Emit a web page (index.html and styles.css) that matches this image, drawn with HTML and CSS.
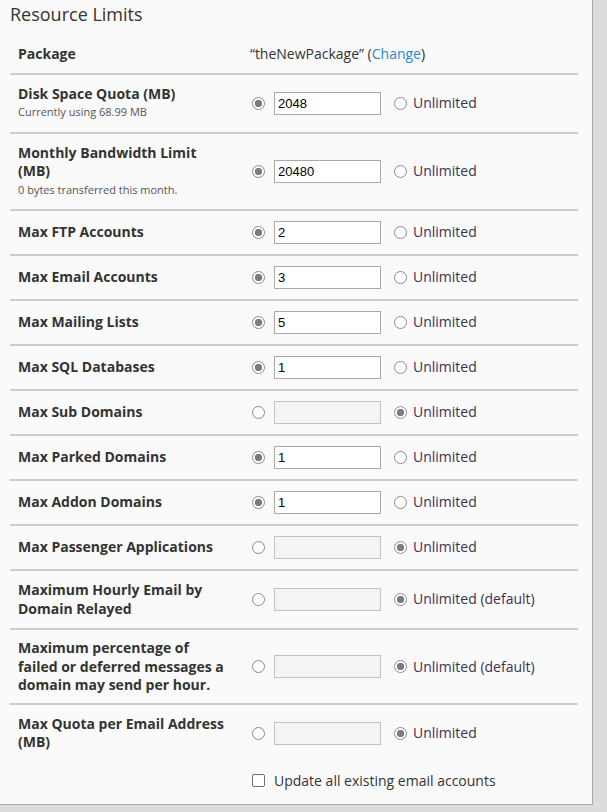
FILE: index.html
```html
<!DOCTYPE html>
<html>
<head>
<meta charset="utf-8">
<link rel="stylesheet" href="styles.css">
</head>
<body>
<div class="panel">
  <h2 class="title">Resource Limits</h2>
  <table class="limits">
    <tr class="pkg">
      <th>Package</th>
      <td>“theNewPackage” (<a href="#" class="link">Change</a>)</td>
    </tr>
    <tr>
      <th>Disk Space Quota (MB)<div class="sub">Currently using 68.99 MB</div></th>
      <td><div class="ctrl"><input type="radio" name="r1" class="radio" checked><input type="text" class="num" value="2048"><label class="unl"><input type="radio" name="r1" class="radio">Unlimited</label></div></td>
    </tr>
    <tr>
      <th>Monthly Bandwidth Limit (MB)<div class="sub">0 bytes transferred this month.</div></th>
      <td><div class="ctrl"><input type="radio" name="r2" class="radio" checked><input type="text" class="num" value="20480"><label class="unl"><input type="radio" name="r2" class="radio">Unlimited</label></div></td>
    </tr>
    <tr>
      <th>Max FTP Accounts</th>
      <td><div class="ctrl"><input type="radio" name="r3" class="radio" checked><input type="text" class="num" value="2"><label class="unl"><input type="radio" name="r3" class="radio">Unlimited</label></div></td>
    </tr>
    <tr>
      <th>Max Email Accounts</th>
      <td><div class="ctrl"><input type="radio" name="r4" class="radio" checked><input type="text" class="num" value="3"><label class="unl"><input type="radio" name="r4" class="radio">Unlimited</label></div></td>
    </tr>
    <tr>
      <th>Max Mailing Lists</th>
      <td><div class="ctrl"><input type="radio" name="r5" class="radio" checked><input type="text" class="num" value="5"><label class="unl"><input type="radio" name="r5" class="radio">Unlimited</label></div></td>
    </tr>
    <tr>
      <th>Max SQL Databases</th>
      <td><div class="ctrl"><input type="radio" name="r6" class="radio" checked><input type="text" class="num" value="1"><label class="unl"><input type="radio" name="r6" class="radio">Unlimited</label></div></td>
    </tr>
    <tr>
      <th>Max Sub Domains</th>
      <td><div class="ctrl"><input type="radio" name="r7" class="radio"><input type="text" class="num" value="" disabled><label class="unl"><input type="radio" name="r7" class="radio" checked>Unlimited</label></div></td>
    </tr>
    <tr>
      <th>Max Parked Domains</th>
      <td><div class="ctrl"><input type="radio" name="r8" class="radio" checked><input type="text" class="num" value="1"><label class="unl"><input type="radio" name="r8" class="radio">Unlimited</label></div></td>
    </tr>
    <tr>
      <th>Max Addon Domains</th>
      <td><div class="ctrl"><input type="radio" name="r9" class="radio" checked><input type="text" class="num" value="1"><label class="unl"><input type="radio" name="r9" class="radio">Unlimited</label></div></td>
    </tr>
    <tr>
      <th>Max Passenger Applications</th>
      <td><div class="ctrl"><input type="radio" name="r10" class="radio"><input type="text" class="num" value="" disabled><label class="unl"><input type="radio" name="r10" class="radio" checked>Unlimited</label></div></td>
    </tr>
    <tr>
      <th>Maximum Hourly Email by Domain Relayed</th>
      <td><div class="ctrl"><input type="radio" name="r11" class="radio"><input type="text" class="num" value="" disabled><label class="unl"><input type="radio" name="r11" class="radio" checked>Unlimited (default)</label></div></td>
    </tr>
    <tr class="tight">
      <th>Maximum percentage of failed or deferred messages a domain may send per hour.</th>
      <td><div class="ctrl"><input type="radio" name="r12" class="radio"><input type="text" class="num" value="" disabled><label class="unl"><input type="radio" name="r12" class="radio" checked>Unlimited (default)</label></div></td>
    </tr>
    <tr>
      <th>Max Quota per Email Address (MB)</th>
      <td><div class="ctrl"><input type="radio" name="r13" class="radio"><input type="text" class="num" value="" disabled><label class="unl"><input type="radio" name="r13" class="radio" checked>Unlimited</label></div></td>
    </tr>
    <tr class="extra">
      <th></th>
      <td><label class="chk"><input type="checkbox" class="box">Update all existing email accounts</label></td>
    </tr>
  </table>
</div>
</body>
</html>
```

FILE: styles.css
```css
html, body {
  margin: 0;
  padding: 0;
  background: #dcdcdc;
}
body {
  font-family: "Open Sans", "Liberation Sans", sans-serif;
  color: #333;
}
.panel {
  width: 593px;
  height: 805px;
  background: #fafafa;
  border-right: 1px solid #a9a9a9;
  border-bottom: 1px solid #a9a9a9;
  box-sizing: border-box;
  overflow: hidden;
}
.title {
  margin: 0;
  padding: 2px 10px 0;
  font-size: 18px;
  font-weight: normal;
  line-height: 24px;
  color: #333;
}
.limits {
  margin: 6px 0 0 10px;
  width: 568px;
  border-collapse: collapse;
}
.limits tr {
  border-top: 2px solid #cdcdcd;
}
.limits tr.pkg,
.limits tr.extra {
  border-top: none;
}
.limits th {
  width: 210px;
  padding: 10px 14px 10px 8px;
  text-align: left;
  vertical-align: middle;
  font-size: 14px;
  font-weight: bold;
  line-height: 18.5px;
  color: #333;
}
.limits td {
  padding: 10px 8px;
  vertical-align: middle;
  font-size: 14px;
  line-height: 18.5px;
}
.limits tr.pkg th,
.limits tr.pkg td {
  padding-top: 13px;
  padding-bottom: 9px;
}
.limits tr.tight th,
.limits tr.tight td {
  padding-top: 9px;
  padding-bottom: 8px;
}
.limits tr.extra th,
.limits tr.extra td {
  padding-top: 10px;
}
.sub {
  font-size: 11px;
  font-weight: normal;
  line-height: 18.5px;
  color: #555;
}
.link {
  color: #2587d0;
  text-decoration: none;
}
.ctrl {
  display: flex;
  align-items: center;
}
.radio {
  appearance: none;
  -webkit-appearance: none;
  width: 13px;
  height: 13px;
  margin: 0;
  border: 1px solid #8a8a8a;
  border-radius: 50%;
  background: #fff;
  box-sizing: border-box;
  flex: none;
}
.radio:checked {
  background: radial-gradient(circle, #7c7c7c 0, #7c7c7c 3.4px, #fff 4px);
  border-color: #8a8a8a;
}
.ctrl > .radio {
  margin-left: 2px;
}
.num {
  width: 107px;
  height: 23px;
  margin: 0 0 0 9px;
  padding: 0 3px;
  box-sizing: border-box;
  border: 1px solid #a9a9a9;
  background: #fff;
  font-family: "Liberation Sans", Arial, sans-serif;
  font-size: 13px;
  color: #000;
  flex: none;
}
.num:disabled {
  background: #f4f4f4;
  border-color: #c2c2c2;
}
.unl {
  display: flex;
  align-items: center;
  gap: 6px;
  margin-left: 13px;
  color: #3a3350;
}
.chk {
  display: flex;
  align-items: center;
  gap: 9px;
  margin-left: 2px;
  color: #333;
}
.box {
  appearance: none;
  -webkit-appearance: none;
  width: 13px;
  height: 13px;
  margin: 0;
  border: 1px solid #6f6f6f;
  border-radius: 2px;
  background: #fff;
  box-sizing: border-box;
  flex: none;
}
```
